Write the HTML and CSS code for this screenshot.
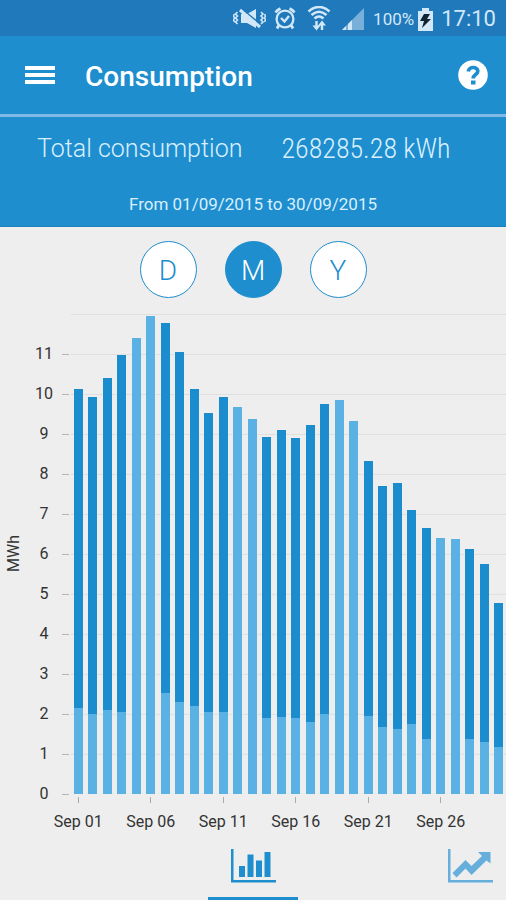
FILE: index.html
```html
<!DOCTYPE html>
<html lang="en">
<head>
<meta charset="utf-8">
<meta name="viewport" content="width=device-width, initial-scale=1">
<title>Consumption</title>
<link rel="stylesheet" href="styles.css">
</head>
<body>
<div class="status">
  <svg class="status-icon" width="33" height="22" viewBox="0 0 33 22" fill="none" stroke="currentColor">
    <path d="M8 6h6l9-5v19l-9-5H8z" fill="currentColor" stroke="none"/>
    <path d="M9 1l19 15.500" stroke="#2079bb" stroke-width="1.500"/>
    <path d="M7 2l20 17" stroke-width="3"/>
    <path d="M4.500 4l-2 2 2 2-2 2 2 2-2 2 2 2M1.500 6l-1 2 1 2-1 2 1 2M28 4l2 2-2 2 2 2-2 2 2 2-2 2M31.500 6l1 2-1 2 1 2-1 2" stroke-width="1.600"/>
  </svg>
  <svg class="status-icon" width="22" height="24" viewBox="1 1 22 24" fill="none" stroke="currentColor" stroke-width="2.300">
    <circle cx="12" cy="13" r="8.400"/>
    <path d="M8 12l3.500 3.500L16 10" stroke-width="2.400"/>
    <path d="M2.500 6.500a12 12 0 0 1 5-4M21.500 6.500a12 12 0 0 0-5-4M6 19l-2 3.500M18 19l2 3.500" stroke-width="2.800"/>
  </svg>
  <svg class="status-icon wifi" width="24" height="26" viewBox="0 1 24 26" fill="none" stroke="currentColor" stroke-width="2.600">
    <path d="M1.500 6.500Q12-2.500 22.500 6.500M4.500 10Q12 3.500 19.500 10M7.500 13.500Q12 9.500 16.500 13.500"/>
    <path d="M9.500 16v6M15 25v-7" stroke-width="2.400"/>
    <path d="M5.500 20.500h8l-4 5zM11 20.500h8l-4-5z" fill="currentColor" stroke="none"/>
  </svg>
  <svg class="status-icon signal" width="24" height="24" viewBox="0 0 24 24" fill="currentColor">
    <path d="M1 23L23 1v22z" opacity=".5"/>
    <path d="M1 23l4-4v4zM7 23v-6l4-4v10z"/>
  </svg>
  <span class="percent">100%</span>
  <svg class="status-icon" width="15" height="23" viewBox="0 0 15 23">
    <path d="M4 0h7v3h4v20H0V3h4z" fill="currentColor"/>
    <path d="M6 6h6l-3 5h4L4 20l2-7H2z" fill="#123"/>
  </svg>
  <time class="clock">17:10</time>
</div>

<header class="appbar">
  <button class="icon-button" type="button" aria-label="Menu">
    <svg width="30" height="20" viewBox="0 0 30 20" fill="currentColor"><path d="M0 1h30v4H0zM0 8h30v4H0zM0 15h30v4H0z"/></svg>
  </button>
  <h1 class="title">Consumption</h1>
  <button class="icon-button" type="button" aria-label="Help">
    <svg width="30" height="30" viewBox="0 0 30 30">
      <circle cx="15" cy="15" r="14.800" fill="currentColor"/>
      <path d="M10.300 11.500C10.800 6.200 19.800 6.200 19.800 11.200C19.800 14.700 15.200 14.500 15.200 18.500" fill="none" stroke="#1e8ece" stroke-width="3.700"/>
      <path d="M13 20.500h4.500v4H13z" fill="#1e8ece"/>
    </svg>
  </button>
</header>

<section class="summary">
  <p class="total"><span>Total consumption</span><span class="total-value">268285.28 kWh</span></p>
  <p class="dates">From 01/09/2015 to 30/09/2015</p>
</section>

<main class="content">
  <div class="periods">
    <button class="period" type="button">D</button>
    <button class="period period-active" type="button">M</button>
    <button class="period" type="button">Y</button>
  </div>
  <div class="chart">
    <div class="unit">MWh</div>
    <div class="y-axis" id="y-axis"></div>
    <div class="bars" id="bars"></div>
    <div class="x-axis" id="x-axis"></div>
  </div>
</main>

<nav class="tabs">
  <a class="tab tab-active" href="#bars" aria-label="Bar chart">
    <svg width="46" height="36" viewBox="0 0 46 36" fill="currentColor">
      <path d="M1 1h2.500v31H46v2.500H1z"/>
      <path d="M9 18h6v11H9zM17.500 6.500h6v22.500h-6zM26 12.500h6v16.500h-6zM34.500 4h6v25h-6z"/>
    </svg>
  </a>
  <a class="tab tab-end" href="#trend" aria-label="Trend">
    <svg width="46" height="36" viewBox="0 0 46 36" fill="currentColor">
      <path d="M1 1h2.500v31H46v2.500H1z"/>
      <path d="M5.500 25L18.500 12l6 6L35 8l-4-4H43.500v11.500L39.500 12.500 24.500 27l-6-6.500L9.500 29.500z"/>
    </svg>
  </a>
</nav>
<script src="chart.js"></script>
</body>
</html>
```
FILE: styles.css
```css
* {
  box-sizing: border-box;
}

body {
  margin: 0;
  min-height: 100vh;
  display: flex;
  flex-direction: column;
  background: #eee;
  color: #333;
  font-family: Roboto, "Liberation Sans", sans-serif;
  font-size: 16px;
  line-height: 20px;
}

button {
  font: inherit;
  border: 0;
  padding: 0;
  background: none;
  color: inherit;
  cursor: pointer;
}

svg {
  display: block;
}

.status {
  height: 36px;
  padding: 2px 10px 0;
  display: flex;
  align-items: center;
  justify-content: flex-end;
  gap: 8px;
  background: #2079bb;
  color: #d2e8f8;
}

.status-icon {
  flex: none;
}

.wifi {
  margin: 0 2px 0 3px;
}

.percent {
  font-size: 17px;
}

.percent + .status-icon {
  margin-left: -4px;
}

.clock {
  font-size: 22px;
}

.appbar {
  height: 81px;
  padding: 0 18px 0 25px;
  display: flex;
  align-items: center;
  gap: 30px;
  background: #1e8ece;
  border-bottom: 3px solid #80b9e6;
  color: #fff;
}

.title {
  flex: 1;
  margin: 0;
  padding-top: 4px;
  font-size: 28px;
  line-height: 32px;
  font-weight: 500;
}

.summary {
  height: 110px;
  padding-top: 16px;
  background: #1e8ece;
  border-bottom: 1px solid #1683be;
  color: #d9efff;
}

.summary p {
  margin: 0;
}

.total {
  padding-left: 37px;
  display: flex;
  align-items: center;
  gap: 39px;
  font-size: 25px;
  line-height: 32px;
  font-weight: 300;
}

.total-value {
  font-family: "Roboto Condensed", Roboto, sans-serif;
  font-size: 28px;
}

.dates {
  padding-top: 29px;
  text-align: center;
  font-size: 17px;
}

.content {
  flex: 1;
  display: flex;
  flex-direction: column;
  padding-top: 14px;
}

.periods {
  display: flex;
  justify-content: center;
  gap: 28px;
}

.period {
  width: 57px;
  height: 57px;
  padding-top: 3px;
  border: 1px solid #1e8ece;
  border-radius: 50%;
  background: #fff;
  color: #1e8ece;
  font-size: 28px;
  font-weight: 300;
}

.period-active {
  background: #1e8ece;
  color: #fff;
}

.chart {
  flex: 1;
  margin-top: 16px;
  display: grid;
  grid-template-columns: 28px 43px 1fr;
  grid-template-rows: 1fr 54px;
}

.unit {
  writing-mode: vertical-rl;
  transform: rotate(180deg);
  text-align: center;
  line-height: 28px;
}

.y-axis {
  display: flex;
  flex-direction: column-reverse;
  justify-content: space-between;
}

.y-label {
  height: 0;
  display: flex;
  align-items: center;
}

.y-label span {
  width: 34px;
  padding-right: 2px;
  text-align: center;
}

.y-label:not(:empty)::after {
  content: "";
  width: 7px;
  height: 1px;
  background: #b4b4b4;
}

.bars {
  display: grid;
  grid-template-columns: repeat(30, 1fr);
  align-items: end;
  background: linear-gradient(#dfdfdf 1px, transparent 1px) 0 0 / 100% calc(100% / 12);
}

.bar {
  width: 64%;
  margin: 0 auto;
  display: flex;
  flex-direction: column;
  justify-content: flex-end;
  background: #1b8ccd;
}

.bar-base {
  background: #5ab2e4;
}

.x-axis {
  grid-column: 3;
  display: grid;
  grid-template-columns: repeat(6, 1fr);
}

.x-label {
  width: 20%;
  display: flex;
  flex-direction: column;
  align-items: center;
  white-space: nowrap;
}

.x-label::before {
  content: "";
  flex: none;
  width: 1px;
  height: 6px;
  margin: 3px 0 9px;
  background: #aaa;
}

.tabs {
  height: 52px;
  display: grid;
  grid-template-columns: 1fr 90px 1fr;
}

.tab {
  grid-column: 2;
  display: flex;
  justify-content: center;
  color: #1e8ece;
}

.tab-active {
  border-bottom: 3px solid #1e8ece;
}

.tab-end {
  grid-column: 3;
  justify-self: end;
  padding-right: 13px;
  color: #66aedb;
}
```
FILE: chart.js
```javascript
// Daily consumption in MWh: [total, base load]; weekends are all base load.
const days = [
  [10.13, 2.15], [9.92, 2], [10.4, 2.1], [10.97, 2.04], [11.4, 11.4],
  [11.94, 11.94], [11.78, 2.53], [11.05, 2.3], [10.13, 2.21], [9.53, 2.04],
  [9.93, 2.04], [9.68, 9.68], [9.38, 9.38], [8.93, 1.9], [9.11, 1.93],
  [8.9, 1.9], [9.22, 1.81], [9.75, 2], [9.85, 9.85], [9.33, 9.33],
  [8.33, 1.95], [7.71, 1.68], [7.78, 1.63], [7.1, 1.75], [6.65, 1.38],
  [6.39, 6.39], [6.38, 6.38], [6.13, 1.38], [5.74, 1.3], [4.78, 1.18]
];
const MAX = 12;

document.getElementById("bars").innerHTML = days.map(([total, base]) =>
  `<div class="bar" style="height:${total / MAX * 100}%"><div class="bar-base" style="height:${base / total * 100}%"></div></div>`
).join("");

let yLabels = "";
for (let v = 0; v < MAX; v++) {
  yLabels += `<div class="y-label"><span>${v}</span></div>`;
}
document.getElementById("y-axis").innerHTML = yLabels + '<div class="y-label"></div>';

document.getElementById("x-axis").innerHTML = ["01", "06", "11", "16", "21", "26"].map(day =>
  `<div class="x-label">Sep ${day}</div>`
).join("");
```
